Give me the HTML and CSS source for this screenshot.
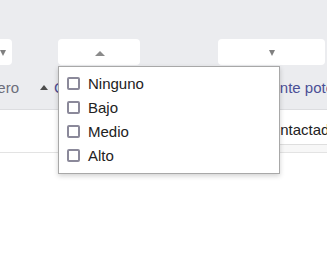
FILE: index.html
```html
<!DOCTYPE html>
<html>
<head>
    <link rel="stylesheet" href="styles.css">
</head>
<body>
    <div class="grid-wrap">
        <div class="grid">
            <div class="row filters">
                <div class="cell col-a">
                    <div class="filter f-a"><span class="caret down"></span></div>
                </div>
                <div class="cell col-b">
                    <div class="filter f-b open">
                        <span class="caret up"></span>
                        <div class="menu">
                            <label class="opt"><input type="checkbox"> Ninguno</label>
                            <label class="opt"><input type="checkbox"> Bajo</label>
                            <label class="opt"><input type="checkbox"> Medio</label>
                            <label class="opt"><input type="checkbox"> Alto</label>
                        </div>
                    </div>
                </div>
                <div class="cell col-c">
                    <div class="filter f-c"><span class="caret down"></span></div>
                </div>
            </div>
            <div class="row head">
                <div class="cell col-a plain">Tercero</div>
                <div class="cell col-b sort"><span class="sort-up"></span>Calificación</div>
                <div class="cell col-c sort"><span class="sort-up"></span>Cliente potencial</div>
            </div>
            <div class="row body-row">
                <div class="cell col-a"></div>
                <div class="cell col-b"></div>
                <div class="cell col-c">
                    <div class="val">Contactado</div>
                    <div class="strip"></div>
                </div>
            </div>
        </div>
    </div>
</body>
</html>
```

FILE: styles.css
```css
html, body {
    margin: 0;
    padding: 0;
    background: #fff;
    overflow: hidden;
}
body {
    font-family: "Liberation Sans", Arial, sans-serif;
    font-size: 15px;
    color: #222;
}
.grid-wrap {
    width: 327px;
    height: 255px;
    overflow: hidden;
}
.grid {
    margin-left: -40px;
    width: 446px;
}
.row {
    display: flex;
}
.col-a { width: 70px; }
.col-b { width: 176px; }
.col-c { width: 200px; }

/* filter row */
.filters {
    background: #ebecef;
    padding-top: 39px;
    height: 27px;
}
.filter {
    position: relative;
    height: 26px;
    background: #fff;
    border-radius: 4px;
    display: flex;
    align-items: center;
    justify-content: center;
}
.f-a { margin-left: 34px; width: 18px; }
.f-b { margin-left: 28px; width: 82px; }
.f-c { margin-left: 12px; width: 107px; }
.caret {
    width: 0;
    height: 0;
}
.caret.down {
    border-left: 3.5px solid transparent;
    border-right: 3.5px solid transparent;
    border-top: 6px solid #808080;
    margin-top: 2px;
}
.caret.up {
    border-left: 5px solid transparent;
    border-right: 5px solid transparent;
    border-bottom: 5px solid #8a8a8a;
    margin-top: 3px;
    margin-left: 2px;
}

/* dropdown */
.menu {
    position: absolute;
    top: 27px;
    left: 0;
    width: 220px;
    padding: 4px 0 6px;
    background: #fff;
    border: 1px solid #a8a8a8;
    box-shadow: 0 2px 5px rgba(0, 0, 0, 0.18);
    z-index: 5;
}
.opt {
    display: flex;
    align-items: center;
    height: 24px;
    padding-left: 8px;
    color: #222;
    white-space: nowrap;
}
.opt input {
    appearance: none;
    -webkit-appearance: none;
    box-sizing: border-box;
    width: 13px;
    height: 13px;
    margin: 0 8px 0 0;
    border: 2px solid #8b899a;
    border-radius: 2px;
    background: #fff;
}

/* header row */
.head {
    background: #ebecef;
    height: 43px;
    border-bottom: 1px solid #dcdde0;
}
.head .cell {
    display: flex;
    align-items: center;
    white-space: nowrap;
    overflow: hidden;
}
.plain {
    color: #6c6e7b;
    justify-content: flex-end;
    padding-right: 11px;
    box-sizing: border-box;
}
.sort {
    color: #4a4f96;
}
.col-b.sort { padding-left: 10px; box-sizing: border-box; }
.col-c.sort { padding-left: 34px; box-sizing: border-box; }
.sort-up {
    width: 0;
    height: 0;
    border-left: 4px solid transparent;
    border-right: 4px solid transparent;
    border-bottom: 5px solid #4d4d4d;
    margin-right: 6px;
    margin-top: -1px;
}

/* body row */
.body-row {
    height: 42px;
    border-bottom: 1px solid #e3e3e3;
}
.body-row .cell {
    white-space: nowrap;
    overflow: hidden;
}
.body-row .col-c {
    display: flex;
    flex-direction: column;
}
.val {
    height: 28px;
    line-height: 28px;
    padding: 6px 0 0 55px;
}
.strip {
    flex: 1;
    background: #f7f7f7;
    border-top: 1px solid #dedede;
}
```
